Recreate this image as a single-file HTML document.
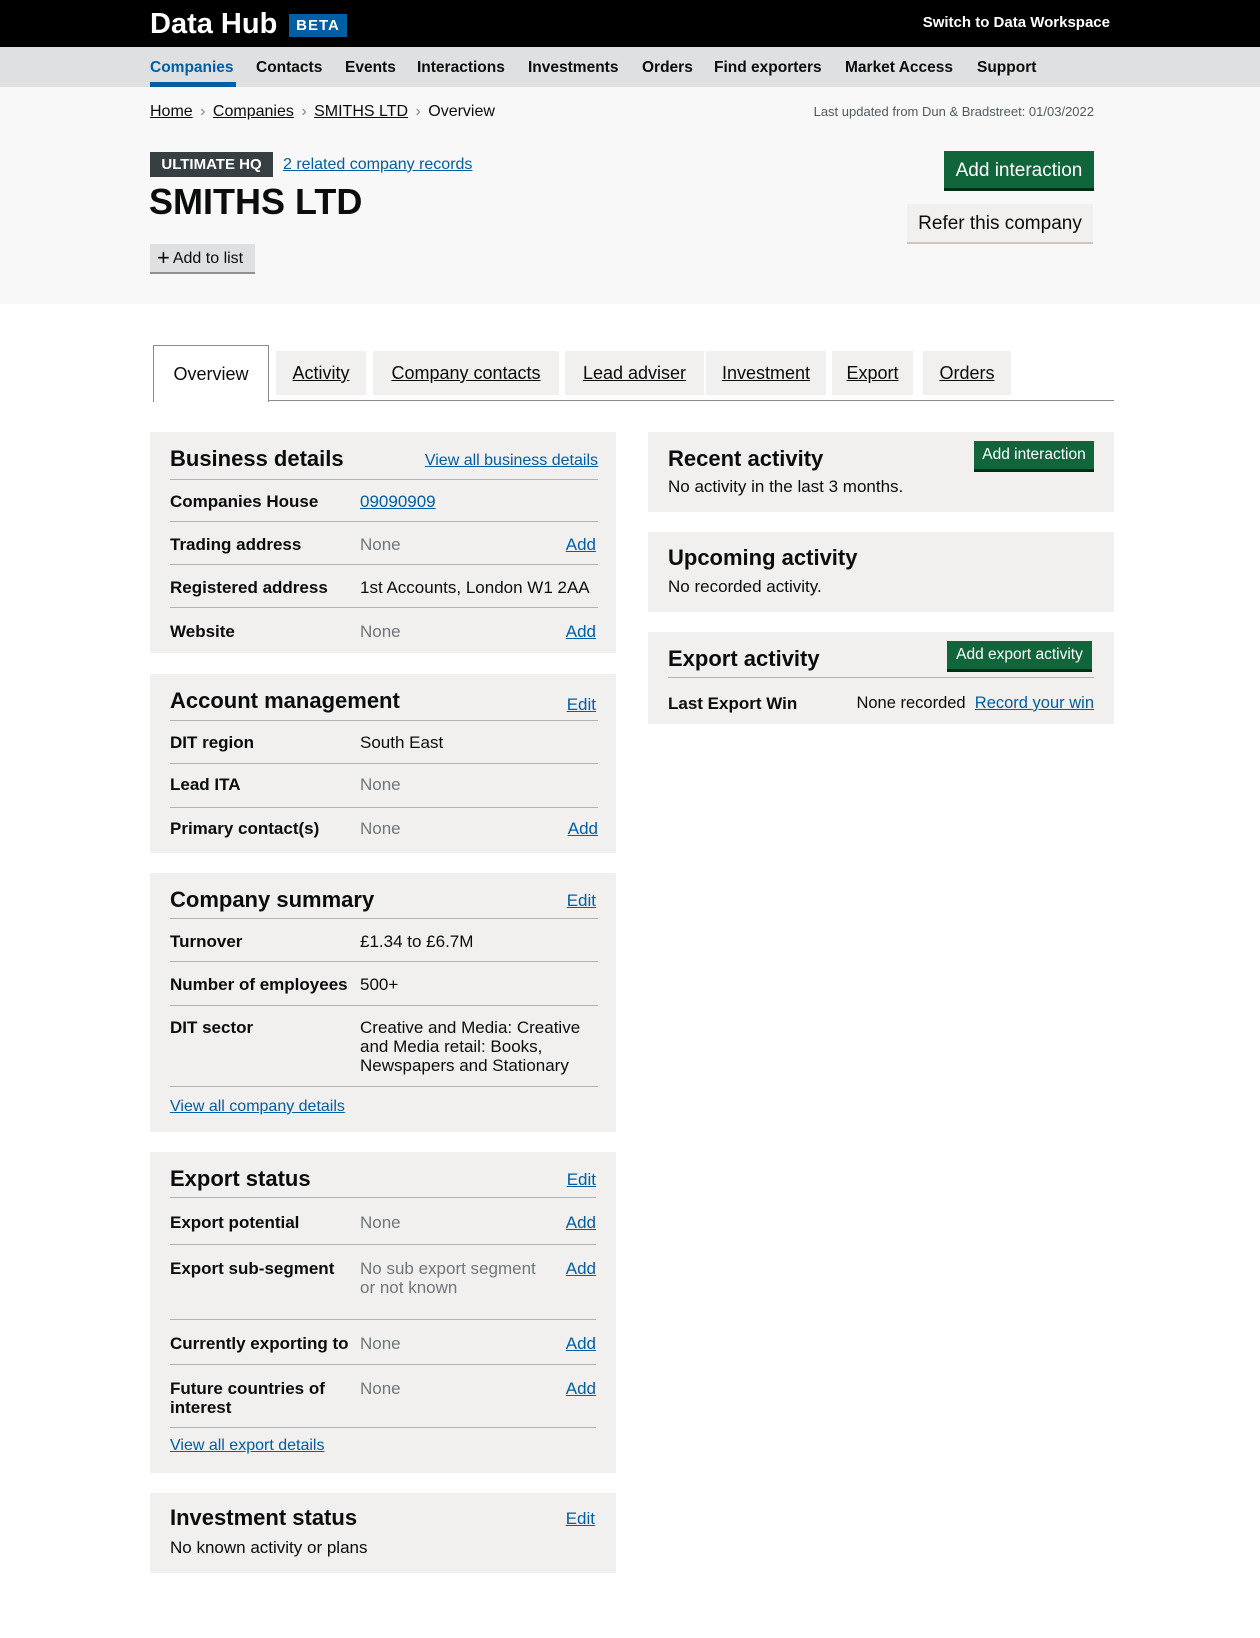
<!DOCTYPE html>
<html><head><meta charset="utf-8">
<style>
*{margin:0;padding:0;box-sizing:border-box}
body{width:1260px;height:1638px;position:relative;background:#fff;font-family:"Liberation Sans",Arial,sans-serif;color:#0b0c0c;overflow:hidden}
.a{position:absolute;white-space:nowrap}
.c{line-height:20px}
a,.lk{color:#005ea5;text-decoration:underline}
.u{text-decoration:underline;color:#0b0c0c}
.panel{position:absolute;background:#f1f0ef}
.line{position:absolute;height:1px;background:#b1b4b6;left:20px;right:18px}
.h{position:absolute;left:20px;font-weight:bold;font-size:22px;line-height:26px}
.lb{position:absolute;left:20px;font-weight:bold;font-size:17px;line-height:19px}
.v{position:absolute;left:210px;font-size:17px;line-height:19px}
.g{color:#6f777b}
.add{position:absolute;right:20px;font-size:17px;line-height:19px;color:#005ea5;text-decoration:underline}
.tab{position:absolute;top:351px;height:44px;background:#f1f0ef;font-size:18px;line-height:44px;text-align:center;text-decoration:underline}
.btn{position:absolute;background:#10653a;color:#fff;box-shadow:0 3px 0 #002d18;text-align:center}
.sep{color:#888;margin:0 3px}
</style></head><body>
<div class="a" style="left:0;top:0;width:1260px;height:47px;background:#000"></div>
<div class="a" style="left:150px;top:7px;font-size:29px;font-weight:bold;color:#fff;line-height:34px">Data Hub</div>
<div class="a" style="left:289px;top:14px;width:58px;height:23px;background:#005ea5;color:#fff;font-weight:bold;font-size:15px;line-height:23px;text-align:center;letter-spacing:1px">BETA</div>
<div class="a" style="right:150px;top:13px;color:#fff;font-weight:bold;font-size:15px;line-height:20px">Switch to Data Workspace</div>
<div class="a" style="left:0;top:47px;width:1260px;height:40px;background:#dee0e2"></div>
<div class="a" style="left:0;top:87px;width:1260px;height:217px;background:#f8f8f8"></div>
<div class="a c" style="top:58px;left:150px;font-size:15.5px;font-weight:bold;color:#005ea5">Companies</div>
<div class="a" style="left:150px;top:82px;width:86px;height:5px;background:#005ea5"></div>
<div class="a c" style="top:58px;left:256px;font-size:15.5px;font-weight:bold">Contacts</div>
<div class="a c" style="top:58px;left:345px;font-size:15.5px;font-weight:bold">Events</div>
<div class="a c" style="top:58px;left:417px;font-size:15.5px;font-weight:bold">Interactions</div>
<div class="a c" style="top:58px;left:528px;font-size:15.5px;font-weight:bold">Investments</div>
<div class="a c" style="top:58px;left:642px;font-size:15.5px;font-weight:bold">Orders</div>
<div class="a c" style="top:58px;left:714px;font-size:15.5px;font-weight:bold">Find exporters</div>
<div class="a c" style="top:58px;left:845px;font-size:15.5px;font-weight:bold">Market Access</div>
<div class="a c" style="top:58px;left:977px;font-size:15.5px;font-weight:bold">Support</div>

<div class="a c" style="top:102px;left:150px;font-size:16px"><span class="u">Home</span> <span class="sep">›</span> <span class="u">Companies</span> <span class="sep">›</span> <span class="u">SMITHS LTD</span> <span class="sep">›</span> Overview</div>
<div class="a c" style="top:102px;right:166px;font-size:13px;color:#505a5f">Last updated from Dun &amp; Bradstreet: 01/03/2022</div>

<div class="a" style="left:150px;top:152px;width:123px;height:25px;background:#383f43;color:#fff;font-weight:bold;font-size:15px;line-height:25px;text-align:center">ULTIMATE HQ</div>
<div class="a c" style="left:283px;top:155px;font-size:16px" ><span class="lk">2 related company records</span></div>
<div class="a" style="left:149px;top:181px;font-size:36px;font-weight:bold;line-height:42px">SMITHS LTD</div>
<div class="a" style="left:150px;top:244px;width:105px;height:30px;background:#dee0e2;border-bottom:2px solid #929191;font-size:16px;line-height:28px;padding-left:7px"><span style="font-size:22px;vertical-align:-2px;margin-right:3px">+</span>Add to list</div>

<div class="btn a" style="left:944px;top:151px;width:150px;height:37px;font-size:19px;line-height:39px">Add interaction</div>
<div class="a" style="left:907px;top:204px;width:186px;height:40px;background:#f1f0ef;border-bottom:2px solid #cbc6c1;font-size:19px;line-height:40px;text-align:center">Refer this company</div>

<div class="a" style="left:153px;top:400px;width:961px;height:1px;background:#8a8a8a"></div>
<div class="a" style="left:153px;top:345px;width:116px;height:57px;background:#fff;border:1px solid #8a8a8a;border-bottom:none;font-size:18px;line-height:56px;text-align:center">Overview</div>
<div class="tab" style="left:276px;width:90px">Activity</div>
<div class="tab" style="left:373px;width:186px">Company contacts</div>
<div class="tab" style="left:565px;width:139px">Lead adviser</div>
<div class="tab" style="left:706px;width:120px">Investment</div>
<div class="tab" style="left:832px;width:81px">Export</div>
<div class="tab" style="left:923px;width:88px">Orders</div>

<!-- Business details -->
<div class="panel" style="left:150px;top:432px;width:466px;height:221px">
<div class="h" style="top:14px">Business details</div>
<div class="a" style="right:18px;top:19px;font-size:16px;line-height:19px"><span class="lk">View all business details</span></div>
<div class="line" style="top:47px"></div>
<div class="lb" style="top:60px">Companies House</div><div class="v" style="top:60px"><span class="lk">09090909</span></div>
<div class="line" style="top:89px"></div>
<div class="lb" style="top:103px">Trading address</div><div class="v g" style="top:103px">None</div><div class="add" style="top:103px">Add</div>
<div class="line" style="top:132px"></div>
<div class="lb" style="top:146px">Registered address</div><div class="v" style="top:146px">1st Accounts, London W1 2AA</div>
<div class="line" style="top:175px"></div>
<div class="lb" style="top:190px">Website</div><div class="v g" style="top:190px">None</div><div class="add" style="top:190px">Add</div>
</div>

<!-- Account management -->
<div class="panel" style="left:150px;top:674px;width:466px;height:179px">
<div class="h" style="top:14px">Account management</div>
<div class="add" style="top:21px;right:20px">Edit</div>
<div class="line" style="top:46px"></div>
<div class="lb" style="top:59px">DIT region</div><div class="v" style="top:59px">South East</div>
<div class="line" style="top:89px"></div>
<div class="lb" style="top:101px">Lead ITA</div><div class="v g" style="top:101px">None</div>
<div class="line" style="top:133px"></div>
<div class="lb" style="top:145px">Primary contact(s)</div><div class="v g" style="top:145px">None</div><div class="add" style="top:145px;right:18px">Add</div>
</div>

<!-- Company summary -->
<div class="panel" style="left:150px;top:873px;width:466px;height:259px">
<div class="h" style="top:14px">Company summary</div>
<div class="add" style="top:18px;right:20px">Edit</div>
<div class="line" style="top:45px"></div>
<div class="lb" style="top:59px">Turnover</div><div class="v" style="top:59px">£1.34 to £6.7M</div>
<div class="line" style="top:88px"></div>
<div class="lb" style="top:102px">Number of employees</div><div class="v" style="top:102px">500+</div>
<div class="line" style="top:132px"></div>
<div class="lb" style="top:145px">DIT sector</div><div class="v" style="top:145px;white-space:normal;width:235px">Creative and Media: Creative and Media retail: Books, Newspapers and Stationary</div>
<div class="line" style="top:213px"></div>
<div class="a" style="left:20px;top:224px;font-size:16px;line-height:19px"><span class="lk">View all company details</span></div>
</div>

<!-- Export status -->
<div class="panel" style="left:150px;top:1152px;width:466px;height:321px">
<div class="h" style="top:14px">Export status</div>
<div class="add" style="top:18px">Edit</div>
<div class="line" style="top:45px;right:20px"></div>
<div class="lb" style="top:61px">Export potential</div><div class="v g" style="top:61px">None</div><div class="add" style="top:61px">Add</div>
<div class="line" style="top:92px;right:20px"></div>
<div class="lb" style="top:107px">Export sub-segment</div><div class="v g" style="top:107px;white-space:normal;width:190px">No sub export segment or not known</div><div class="add" style="top:107px">Add</div>
<div class="line" style="top:167px;right:20px"></div>
<div class="lb" style="top:182px">Currently exporting to</div><div class="v g" style="top:182px">None</div><div class="add" style="top:182px">Add</div>
<div class="line" style="top:212px;right:20px"></div>
<div class="lb" style="top:227px;white-space:normal;width:170px">Future countries of interest</div><div class="v g" style="top:227px">None</div><div class="add" style="top:227px">Add</div>
<div class="line" style="top:275px;right:20px"></div>
<div class="a" style="left:20px;top:284px;font-size:16px;line-height:19px"><span class="lk">View all export details</span></div>
</div>

<!-- Investment status -->
<div class="panel" style="left:150px;top:1493px;width:466px;height:80px">
<div class="h" style="top:12px">Investment status</div>
<div class="add" style="top:16px;right:21px">Edit</div>
<div class="lb" style="top:45px;font-weight:normal">No known activity or plans</div>
</div>

<!-- Right column -->
<div class="panel" style="left:648px;top:432px;width:466px;height:80px">
<div class="h" style="top:14px">Recent activity</div>
<div class="lb" style="top:45px;font-weight:normal">No activity in the last 3 months.</div>
<div class="btn" style="left:326px;top:9px;width:120px;height:28px;font-size:15.5px;line-height:28px">Add interaction</div>
</div>
<div class="panel" style="left:648px;top:532px;width:466px;height:80px">
<div class="h" style="top:13px">Upcoming activity</div>
<div class="lb" style="top:45px;font-weight:normal">No recorded activity.</div>
</div>
<div class="panel" style="left:648px;top:632px;width:466px;height:92px">
<div class="h" style="top:14px">Export activity</div>
<div class="btn" style="left:299px;top:9px;width:145px;height:28px;font-size:15.5px;line-height:28px">Add export activity</div>
<div class="line" style="top:45px;right:20px"></div>
<div class="lb" style="top:62px">Last Export Win</div>
<div class="a" style="right:20px;top:62px;font-size:16.5px;line-height:19px">None recorded&nbsp; <span class="lk">Record your win</span></div>
</div>
</body></html>
